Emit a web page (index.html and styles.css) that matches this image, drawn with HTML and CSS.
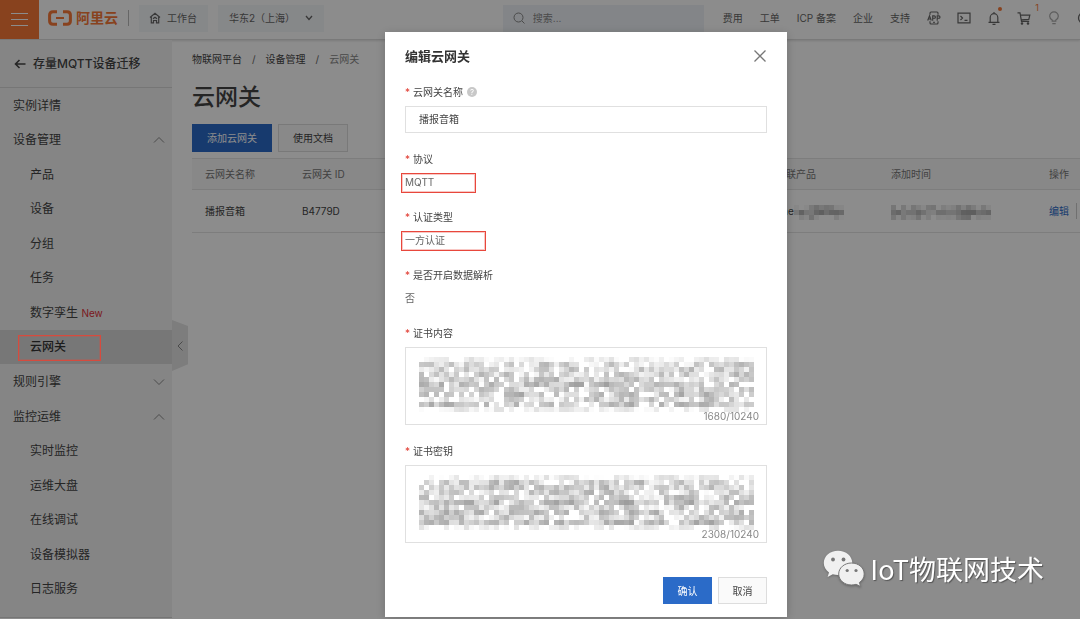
FILE: index.html
```html
<!DOCTYPE html>
<html lang="zh-CN">
<head>
<meta charset="utf-8">
<meta name="viewport" content="width=device-width, initial-scale=1">
<title>云网关</title>
<link rel="stylesheet" href="styles.css">
</head>
<body>
<div class="page">
  <header class="topbar">
    <button class="menu-btn" type="button" aria-label="菜单"><span></span><span></span><span></span></button>
    <a class="logo" href="#">
      <svg viewBox="0 0 24 16" width="24" height="16" fill="none" stroke="currentColor" stroke-width="3"><path d="M9 1.700H5Q1.600 1.700 1.600 5v6q0 3.300 3.400 3.300h4M15 1.700h4q3.400 0 3.400 3.300v6q0 3.300-3.400 3.300h-4"/><path d="M8 8h8" stroke-width="2"/></svg>
      <span>阿里云</span>
    </a>
    <a class="chip chip-home" href="#">
      <svg viewBox="0 0 12 12" width="12" height="12" fill="none" stroke="currentColor" stroke-width="1.200"><path d="M1 5.500 6 1.200l5 4.300M2.300 5v5.800h2.200V8.500h3v2.300h2.200V5M4 6.800 6 5.200l2 1.600"/></svg>
      工作台
    </a>
    <button class="chip chip-region" type="button">华东2（上海）
      <svg viewBox="0 0 8 6" width="8" height="6" fill="none" stroke="currentColor" stroke-width="1.300"><path d="m1 1 3 3.500L7 1"/></svg>
    </button>
    <label class="search">
      <svg viewBox="0 0 12 12" width="12" height="12" fill="none" stroke="currentColor"><circle cx="5.500" cy="5.500" r="4.500"/><path d="m9 9 2.500 2.500"/></svg>
      <input type="search" placeholder="搜索..." aria-label="搜索">
    </label>
    <nav class="topnav" aria-label="顶部导航">
      <a href="#">费用</a><a href="#">工单</a><a href="#">ICP 备案</a><a href="#">企业</a><a href="#">支持</a>
      <button type="button" aria-label="应用"><svg viewBox="0 0 14 14" width="14" height="14" fill="none" stroke="currentColor" stroke-width="1.100"><path d="M3 3.700V2q0-1 1-1h6q1 0 1 1v1.700M3 10.300V12q0 1 1 1h6q1 0 1-1v-1.700M.7 9.500 2.500 4.700l1.800 4.800M1.300 8h2.400M5.700 9.800V4.900h1.500q1.200 0 1.200 1.200T7.200 7.300H5.700M10.200 9.800V4.900h1.500q1.300 0 1.300 1.200t-1.300 1.200h-1.500M6.200 11.400h1.600"/></svg></button>
      <button type="button" aria-label="命令行"><svg viewBox="0 0 14 14" width="14" height="14" fill="none" stroke="currentColor" stroke-width="1.200"><path d="M1 2.200h12v9.600H1zM3.500 5l2 2-2 2M7.500 9.300h3"/></svg></button>
      <button class="has-dot" type="button" aria-label="消息"><svg viewBox="0 0 14 14" width="14" height="14" fill="none" stroke="currentColor" stroke-width="1.200"><path d="M1.500 11.300h11M3.200 11V6.500a3.800 3.800 0 0 1 7.600 0V11M7 2.700V1M5.500 13.400h3"/></svg></button>
      <button class="has-count" type="button" aria-label="购物车"><svg viewBox="0 0 14 14" width="14" height="14" fill="none" stroke="currentColor" stroke-width="1.200"><path d="M.5 1.800H3l1.500 8.500h7.700M3.300 4.200h9.500l-1 4.200-7.600.4"/><circle cx="5" cy="12.500" r=".7"/><circle cx="11" cy="12.500" r=".7"/></svg><span class="count">1</span></button>
      <button class="faint" type="button" aria-label="提示"><svg viewBox="0 0 14 14" width="14" height="14" fill="none" stroke="currentColor" stroke-width="1.200"><path d="M5.200 10.200V9Q2.700 7.600 2.700 5.200a4.300 4.300 0 0 1 8.600 0Q11.300 7.600 8.800 9v1.200zM5.300 12.600h3.400"/></svg></button>
      <button type="button" aria-label="帮助"><svg viewBox="0 0 14 14" width="14" height="14" fill="none" stroke="currentColor" stroke-width="1.300"><circle cx="7" cy="7" r="5.500"/></svg></button>
    </nav>
  </header>

  <div class="body">
    <aside class="sidebar">
      <a class="back" href="#">
        <svg viewBox="0 0 12 10" width="12" height="10" fill="none" stroke="currentColor" stroke-width="1.600"><path d="M11.500 5H1.500M5.500 1l-4 4 4 4"/></svg>
        存量MQTT设备迁移
      </a>
      <ul class="menu">
        <li class="item"><a href="#">实例详情</a></li>
        <li class="item"><a href="#">设备管理</a><svg class="chev" viewBox="0 0 12 8" width="12" height="8"><path d="m1 6.500 5-5 5 5"/></svg></li>
        <li class="item sub"><a href="#">产品</a></li>
        <li class="item sub"><a href="#">设备</a></li>
        <li class="item sub"><a href="#">分组</a></li>
        <li class="item sub"><a href="#">任务</a></li>
        <li class="item sub"><a href="#">数字孪生 <em>New</em></a></li>
        <li class="item sub active"><a href="#" aria-current="page">云网关</a></li>
        <li class="item"><a href="#">规则引擎</a><svg class="chev" viewBox="0 0 12 8" width="12" height="8"><path d="m1 1.500 5 5 5-5"/></svg></li>
        <li class="item"><a href="#">监控运维</a><svg class="chev" viewBox="0 0 12 8" width="12" height="8"><path d="m1 6.500 5-5 5 5"/></svg></li>
        <li class="item sub"><a href="#">实时监控</a></li>
        <li class="item sub"><a href="#">运维大盘</a></li>
        <li class="item sub"><a href="#">在线调试</a></li>
        <li class="item sub"><a href="#">设备模拟器</a></li>
        <li class="item sub"><a href="#">日志服务</a></li>
      </ul>
      <button class="collapse" type="button" aria-label="收起"><svg viewBox="0 0 6 10" width="6" height="10" fill="none" stroke="currentColor"><path d="M5.500.5 1 5l4.500 4.500"/></svg></button>
    </aside>

    <main class="main">
      <nav class="crumbs" aria-label="面包屑"><a href="#">物联网平台</a><i>/</i><a href="#">设备管理</a><i>/</i><span>云网关</span></nav>
      <h1>云网关</h1>
      <div class="actions">
        <button class="btn primary" type="button">添加云网关</button>
        <button class="btn" type="button">使用文档</button>
      </div>
      <table class="grid">
        <thead><tr><th class="c-name">云网关名称</th><th>云网关 ID</th><th class="c-prod">关联产品</th><th class="c-time">添加时间</th><th class="c-op">操作</th></tr></thead>
        <tbody><tr>
          <td>播报音箱</td><td>B4779D</td>
          <td>one<svg class="mosaic" data-cols="10" data-rows="3" data-tone="dark" data-seed="5"></svg></td>
          <td><svg class="mosaic" data-cols="20" data-rows="3" data-tone="dark" data-seed="11"></svg></td>
          <td><a class="edit" href="#">编辑</a></td>
        </tr></tbody>
      </table>
    </main>
  </div>
</div>

<div class="backdrop">
  <form class="dialog" role="dialog" aria-modal="true" aria-labelledby="dlg-title">
    <div class="dialog-head">
      <h2 id="dlg-title">编辑云网关</h2>
      <button class="close" type="button" aria-label="关闭"><svg viewBox="0 0 12 12" width="12" height="12" fill="none" stroke="currentColor" stroke-width="1.300"><path d="m.5.5 11 11M11.500.5l-11 11"/></svg></button>
    </div>
    <div class="field">
      <label for="gw-name">云网关名称 <span class="help">?</span></label>
      <input id="gw-name" type="text" value="播报音箱">
    </div>
    <div class="field">
      <span class="label">协议</span>
      <output class="value marked">MQTT</output>
    </div>
    <div class="field">
      <span class="label">认证类型</span>
      <output class="value marked wide">一方认证</output>
    </div>
    <div class="field">
      <span class="label">是否开启数据解析</span>
      <output class="value">否</output>
    </div>
    <div class="field">
      <label for="cert">证书内容</label>
      <div class="area">
        <textarea id="cert"></textarea>
        <svg class="mosaic" data-cols="67" data-rows="11" data-seed="3"></svg>
        <span class="counter">1680/10240</span>
      </div>
    </div>
    <div class="field">
      <label for="key">证书密钥</label>
      <div class="area">
        <textarea id="key"></textarea>
        <svg class="mosaic" data-cols="67" data-rows="11" data-seed="8"></svg>
        <span class="counter">2308/10240</span>
      </div>
    </div>
    <div class="dialog-foot">
      <button class="btn primary" type="submit">确认</button>
      <button class="btn" type="button">取消</button>
    </div>
  </form>
</div>

<div class="watermark">
  <svg viewBox="0 0 42 37" width="42" height="37">
    <path d="M15 .8C7 .8.8 6.200.8 13c0 3.800 2 7.200 5.200 9.400L4.600 27l5.200-2.800c1.700.5 3.400.7 5.200.7 8 0 14.300-5.300 14.300-12S23 .8 15 .8z"/>
    <path class="front" d="M28.500 13c-7.200 0-12.800 4.900-12.800 11s5.600 11 12.800 11c1.600 0 3.200-.3 4.600-.7l4.500 2.200-1.200-4c2.900-2 4.800-5 4.800-8.500 0-6.100-5.600-11-12.700-11z"/>
    <g class="eyes"><circle cx="10" cy="9.500" r="1.900"/><circle cx="20.500" cy="9.500" r="1.900"/><circle cx="24.200" cy="20.500" r="1.600"/><circle cx="33" cy="20.500" r="1.600"/></g>
  </svg>
  <span>IoT物联网技术</span>
</div>
<script src="mosaic.js"></script>
</body>
</html>
```

FILE: styles.css
```css
*, *::before, *::after { box-sizing: border-box; }

body {
  margin: 0;
  font: 10px/20px Inter, "Noto Sans CJK SC", sans-serif;
  color: #444;
  background: #fff;
}

a { color: inherit; text-decoration: none; }
button, input, textarea { font: inherit; color: inherit; }
button { padding: 0; border: 0; background: none; cursor: pointer; }
svg { display: block; flex: none; }

.page { display: flex; flex-direction: column; min-height: 100vh; overflow: hidden; }

/* Top bar */
.topbar {
  display: flex;
  align-items: center;
  height: 40px;
  padding-bottom: 3px;
  border-bottom: 1px solid #dcdcdc;
  box-shadow: 0 1px 2px #e0e0e0;
  color: #666;
}
.menu-btn {
  display: flex;
  flex-direction: column;
  justify-content: center;
  align-items: center;
  gap: 5px;
  width: 39px;
  height: 39px;
  margin: 3px 9px 0 0;
  flex: none;
  background: #f77838;
}
.menu-btn span { width: 17px; height: 1px; background: #fff; }
.logo {
  display: flex;
  align-items: center;
  gap: 4px;
  padding-right: 10px;
  margin-right: 10px;
  height: 16px;
  border-right: 1px solid #bbb;
  color: #f77838;
  font-size: 14px;
  font-weight: 700;
  white-space: nowrap;
}
.chip {
  display: flex;
  align-items: center;
  height: 27px;
  padding: 0 11px;
  background: #f5f7fa;
  white-space: nowrap;
}
.chip-home { gap: 6px; padding-left: 10px; margin-right: 10px; }
.chip-region { gap: 10px; }
.search {
  display: flex;
  align-items: center;
  gap: 8px;
  width: 201px;
  height: 27px;
  padding: 0 10px;
  margin: 0 19px 0 auto;
  background: #eff3f8;
  color: #888;
}
.search input { width: 100%; padding: 0; border: 0; outline: 0; background: none; }
.search input::placeholder { color: #888; opacity: 1; }
.topnav { display: flex; align-items: center; gap: 17px; margin-right: -10px; white-space: nowrap; }
.topnav button { position: relative; margin-right: -1px; }
.topnav .faint { color: #aaa; }
.has-dot::after {
  content: "";
  position: absolute;
  top: -4px;
  right: -1px;
  width: 4px;
  height: 4px;
  border-radius: 50%;
  background: #f77838;
}
.topnav .count { position: absolute; top: -8px; right: -8px; color: #f77838; font-size: 9px; line-height: 10px; }

/* Sidebar */
.body { display: flex; flex: 1; }
.sidebar {
  position: relative;
  display: flex;
  flex-direction: column;
  flex: none;
  width: 172px;
  margin-bottom: 1px;
  border-bottom: 1px solid #d5d5d5;
  background: #f3f3f3;
  font-size: 12px;
}
.back {
  display: flex;
  align-items: center;
  gap: 7px;
  height: 48px;
  padding-left: 14px;
  border-bottom: 1px solid #d8d8d8;
  font-weight: 500;
}
.menu { display: flex; flex-direction: column; flex: 1; margin: 0; padding: 0 0 11px; list-style: none; }
.item {
  position: relative;
  display: flex;
  flex: 1;
  align-items: center;
  justify-content: space-between;
  min-height: 34px;
  padding: 1px 7px 0 13px;
}
.sub { padding-left: 30px; }
.item em { color: #e0303a; font-size: 10px; font-style: normal; }
.active { background: #d9d9d9; font-weight: 500; color: #333; }
.active::after {
  content: "";
  position: absolute;
  z-index: 20;
  top: 5px;
  left: 18px;
  width: 83px;
  height: 26px;
  border: 1px solid #d64b3e;
  outline: 1px solid rgba(214, 75, 62, .3);
  outline-offset: -2px;
}
.chev { fill: none; stroke: #888; }
.collapse {
  position: absolute;
  top: 280px;
  left: 100%;
  display: flex;
  align-items: center;
  justify-content: center;
  width: 16px;
  height: 51px;
  background: #e4e4e4;
  color: #888;
  clip-path: polygon(0 0, 100% 12%, 100% 87%, 0 100%);
}

/* Main */
.main { flex: 1; min-width: 0; padding: 9px 0 0 20px; }
.crumbs { display: flex; gap: 10px; }
.crumbs i { color: #666; font-style: normal; }
.crumbs span { color: #888; }
h1 { margin: 12px 0 11px; font-size: 23px; line-height: 32px; font-weight: 500; }
.actions { display: flex; gap: 6px; margin-bottom: 6px; }
.btn {
  height: 28px;
  padding: 0 14px;
  border: 1px solid #ddd;
  background: #fafafa;
}
.btn.primary { border-color: #2b6bc8; background: #2b6bc8; color: #fff; }
.grid { width: 100%; border-collapse: collapse; table-layout: fixed; text-align: left; white-space: nowrap; }
.grid th, .grid td { padding: 0 0 0 13px; border-bottom: 1px solid #e3e3e3; }
.grid th { height: 31px; border-top: 1px solid #e3e3e3; background: #f8f8f8; color: #777; font-weight: 400; }
.grid td { height: 43px; }
.grid .mosaic { display: inline-block; vertical-align: middle; }
.c-name { width: 97px; }
.c-prod { width: 115px; }
.c-time { width: 158px; }
.c-op { width: 44px; }
.edit { display: inline-block; padding-right: 7px; border-right: 1px solid #ccc; line-height: 16px; color: #2b6bc8; }

/* Dialog */
.backdrop {
  position: fixed;
  z-index: 10;
  inset: 0;
  display: flex;
  justify-content: center;
  align-items: flex-start;
  padding: 32px 0 0 92px;
  overflow: hidden;
  background: rgba(0, 0, 0, .45);
}
.dialog {
  width: 402px;
  padding: 14px 20px 13px;
  background: #fff;
  box-shadow: 0 2px 10px rgba(0, 0, 0, .2);
}
.dialog-head { display: flex; justify-content: space-between; align-items: center; margin-bottom: 16px; }
h2 { margin: 0; font-size: 13px; line-height: 20px; font-weight: 700; color: #333; }
.close { margin-right: 1px; color: #777; }
.field { display: flex; flex-direction: column; gap: 4px; margin-bottom: 16px; }
.field label, .label { display: flex; align-items: center; line-height: 20px; }
.field label::before, .label::before { content: "*"; width: 8px; color: #e03a30; }
.help {
  width: 10px;
  height: 10px;
  margin-left: 4px;
  border-radius: 50%;
  background: #c8c8c8;
  color: #fff;
  font-size: 8px;
  line-height: 10px;
  text-align: center;
}
.field input, .area { border: 1px solid #e0e0e0; }
.field input { height: 27px; padding: 0 13px 2px; border-radius: 0; }
.value { position: relative; display: block; line-height: 18px; color: #666; }
.marked::after {
  content: "";
  position: absolute;
  top: 0;
  left: -4px;
  width: 75px;
  height: 20px;
  border: 1px solid #e8473c;
  outline: 1px solid rgba(232, 71, 60, .3);
  outline-offset: -2px;
}
.wide::after { width: 85px; }
.area { position: relative; height: 78px; }
.area textarea { display: block; width: 100%; height: 100%; padding: 0; border: 0; resize: none; background: none; }
.area .mosaic { position: absolute; top: 9px; left: 13px; }
.counter { position: absolute; right: 7px; bottom: -2px; color: #888; }
.dialog-foot { display: flex; justify-content: flex-end; gap: 6px; margin-top: 34px; }
.dialog-foot .btn { width: 49px; height: 27px; padding: 0; }

/* Watermark */
.watermark {
  position: fixed;
  z-index: 30;
  right: 36px;
  bottom: 32px;
  display: flex;
  align-items: center;
  gap: 5px;
  color: #fff;
  font: 27px/37px "Noto Sans CJK SC", sans-serif;
  text-shadow: 1px 1px 1px #555;
}
.watermark svg { fill: #f0f0f0; filter: drop-shadow(0 1px 1px #666); }
.watermark .front { stroke: #777; stroke-width: 1px; }
.watermark .eyes { fill: #777; }
```

FILE: mosaic.js
```javascript
// Fills each .mosaic with a grid of 5px grey cells standing in for masked text.
document.querySelectorAll('.mosaic').forEach(function (svg) {
  var cols = +svg.dataset.cols, rows = +svg.dataset.rows, seed = +svg.dataset.seed;
  var dark = svg.dataset.tone === 'dark';
  function rand() {
    seed = (seed * 16807 + 12345) % 2147483647;
    return seed / 2147483647;
  }
  for (var i = 0; i < 20; i++) rand();
  svg.setAttribute('width', cols * 5);
  svg.setAttribute('height', rows * 5);
  for (var y = 0; y < rows; y++) {
    var edge = !dark && (y === 0 || y === rows - 1);
    var prev = 0.5;
    for (var x = 0; x < cols; x++) {
      var r = rand();
      var v = prev = r * 0.75 + prev * 0.25;
      var level;
      if (dark) level = y === 1 ? 165 + v * 70 : 195 + v * 85;
      else if (edge) level = 215 + v * 60;
      else level = 168 + v * 100;
      if (!dark && !edge && y % 2 === 1 && y > 4) level -= 14;
      if (!dark && !edge && r > 0.85) level += 25;
      level = Math.min(255, Math.round(level));
      var cell = document.createElementNS('http://www.w3.org/2000/svg', 'rect');
      cell.setAttribute('x', x * 5);
      cell.setAttribute('y', y * 5);
      cell.setAttribute('width', 5);
      cell.setAttribute('height', 5);
      cell.setAttribute('fill', 'rgb(' + level + ',' + level + ',' + level + ')');
      svg.appendChild(cell);
    }
  }
});
```
